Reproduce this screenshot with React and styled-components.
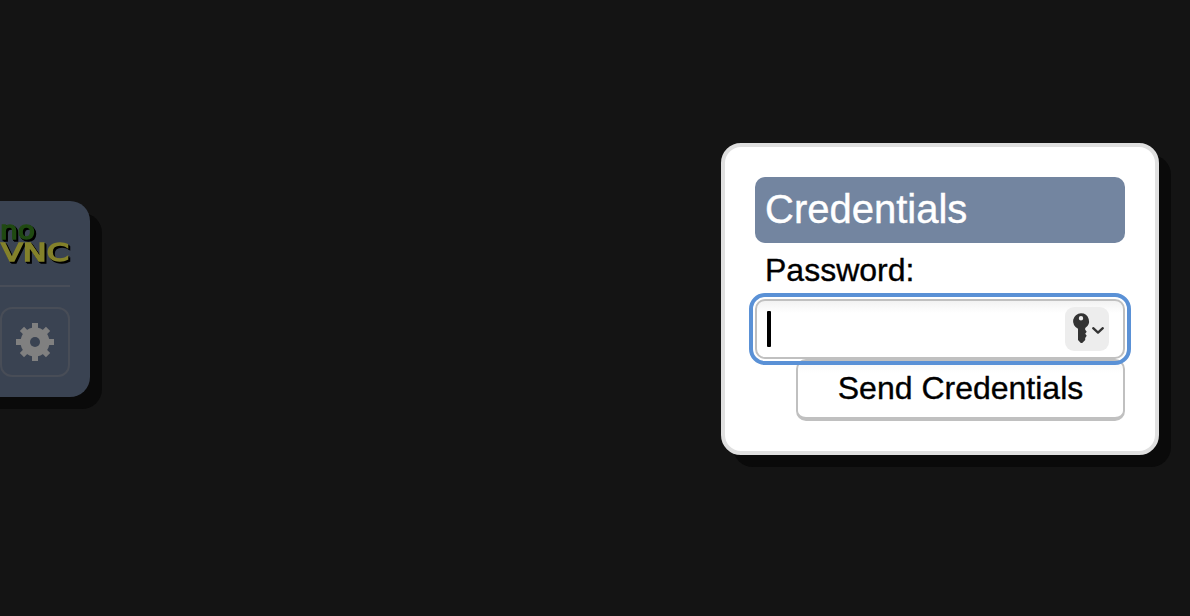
import React from 'react';
import styled, { createGlobalStyle } from 'styled-components';

const GlobalStyle = createGlobalStyle`
  * { box-sizing: border-box; }
  body {
    margin: 0;
    background: #141414;
    font-family: "Liberation Sans", Arial, Helvetica, sans-serif;
    overflow: hidden;
  }
`;

const Screen = styled.main`
  display: flex;
  justify-content: space-between;
  align-items: flex-start;
  width: 1190px;
  height: 616px;
  padding-right: 31px;
`;

const ControlBar = styled.aside`
  display: flex;
  flex-direction: column;
  width: 130px;
  height: 196px;
  margin: 201px 0 0 -40px;
  padding: 0 20px 0 40px;
  background: #3a4352;
  border-radius: 20px;
  box-shadow: 12px 12px 0 #0a0a0a;
`;

const Logo = styled.svg`
  display: block;
  width: 74px;
  height: 84px;
  flex: none;
`;

const LogoText = styled.text`
  font-family: "DejaVu Sans", sans-serif;
  font-weight: 400;
  font-size: ${({ $size }) => $size}px;
  fill: ${({ $color }) => $color};
  stroke: ${({ $color }) => $color};
  stroke-width: 1.5px;
  filter: drop-shadow(1px 1px 0 #000) drop-shadow(1px 1px 0 #000);
`;

const Divider = styled.hr`
  width: 100%;
  height: 2px;
  margin: 0 0 20px;
  border: 0;
  background: #484d58;
`;

const SettingsButton = styled.button`
  display: flex;
  align-items: center;
  justify-content: center;
  width: 70px;
  height: 70px;
  padding: 0;
  border: 2px solid #484d57;
  border-radius: 12px;
  background: transparent;
`;

const Dialog = styled.form`
  display: flex;
  flex-direction: column;
  width: 438px;
  height: 312px;
  margin-top: 143px;
  padding: 30px;
  border: 4px solid #e0e0e0;
  border-radius: 20px;
  background: #fff;
  box-shadow: 12px 12px 0 #0a0a0a;
`;

const Heading = styled.h1`
  height: 66px;
  margin: 0;
  padding: 0 10px;
  border-radius: 10px;
  background: #7385a0;
  color: #fff;
  font-size: 40px;
  font-weight: 400;
  line-height: 64px;
  -webkit-text-stroke: 0.4px #fff;
`;

const Label = styled.label`
  height: 56px;
  padding: 0 10px;
  font-size: 32px;
  line-height: 54px;
  -webkit-text-stroke: 0.35px #000;
`;

const PasswordField = styled.div`
  position: relative;
  z-index: 1;
  display: flex;
  align-items: center;
  justify-content: space-between;
  height: 60px;
  flex: none;
  padding: 0 14px 0 10px;
  border: 2px solid #c0c0c0;
  border-radius: 10px;
  outline: 4px solid #5a91d6;
  outline-offset: 2px;
  background: linear-gradient(#f2f2f2, #fff 12px);
`;

const Caret = styled.span`
  width: 4px;
  height: 36px;
  border-radius: 1px;
  background: #000;
`;

const KeyMenu = styled.span`
  display: flex;
  width: 44px;
  height: 44px;
  border-radius: 9px;
  background: #ededed;
`;

const SendButton = styled.button`
  align-self: flex-end;
  width: 329px;
  height: 62px;
  flex: none;
  padding: 0 0 2px;
  border: 2px solid #c0c0c0;
  border-bottom-width: 4px;
  border-radius: 10px;
  background: linear-gradient(#f7f7f7, #fff 12px);
  color: #000;
  font-family: inherit;
  font-size: 32px;
  line-height: 54px;
  -webkit-text-stroke: 0.35px #000;
`;

function NoVncLogo() {
  return (
    <Logo viewBox="0 0 74 84" aria-label="noVNC">
      <LogoText $color="#204a12" $size={25} x="0" y="38" textLength="35" lengthAdjust="spacingAndGlyphs">no</LogoText>
      <LogoText $color="#84822b" $size={25} x="1" y="60" textLength="68" lengthAdjust="spacingAndGlyphs">VNC</LogoText>
    </Logo>
  );
}

function Gear() {
  return (
    <svg width="38" height="38" viewBox="-19 -19 38 38">
      <g fill="#808080">
        <circle r="14.5" />
        {[0, 45, 90, 135].map((angle) => (
          <rect
            key={angle}
            x="-3"
            y={angle % 90 ? -18.5 : -19}
            width="6"
            height={angle % 90 ? 37 : 38}
            transform={`rotate(${angle})`}
          />
        ))}
      </g>
      <circle r="5" fill="#3a4352" />
    </svg>
  );
}

function KeyIcon() {
  return (
    <svg width="44" height="44" viewBox="0 0 44 44">
      <path
        fill="#333"
        fillRule="evenodd"
        d="M16 6.3a8 8 0 0 1 4.2 14.8v1.7l1.5 1.9-1.5 2 1.5 2-1.5 2.2v2L17.2 36h-1.4L13 33V21.7A8 8 0 0 1 16 6.3Zm0 2.7a2.2 2.2 0 1 0 0 4.4A2.2 2.2 0 0 0 16 9Z"
      />
      <path d="M28.2 21.2 33 25.6 37.8 21.2" fill="none" stroke="#333" strokeWidth="2.3" strokeLinecap="round" strokeLinejoin="round" />
    </svg>
  );
}

export default function App() {
  return (
    <>
      <GlobalStyle />
      <Screen>
        <ControlBar>
          <NoVncLogo />
          <Divider />
          <SettingsButton type="button" aria-label="Settings">
            <Gear />
          </SettingsButton>
        </ControlBar>
        <Dialog>
          <Heading>Credentials</Heading>
          <Label>Password:</Label>
          <PasswordField>
            <Caret />
            <KeyMenu>
              <KeyIcon />
            </KeyMenu>
          </PasswordField>
          <SendButton type="button">Send Credentials</SendButton>
        </Dialog>
      </Screen>
    </>
  );
}
